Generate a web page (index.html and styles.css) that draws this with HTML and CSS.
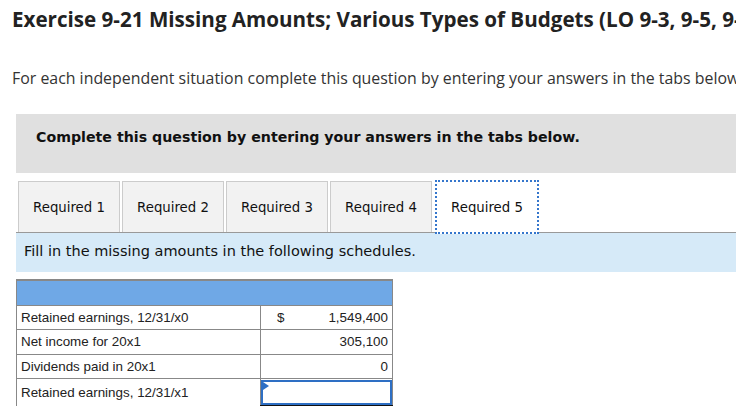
FILE: index.html
```html
<!DOCTYPE html>
<html>
<head>
    <title>Exercise 9-21</title>
    <link rel="stylesheet" href="styles.css">
</head>
<body>
    <h1 class="title">Exercise 9-21 Missing Amounts; Various Types of Budgets (LO 9-3, 9-5, 9-6)</h1>

    <p class="intro">For each independent situation complete this question by entering your answers in the tabs below.</p>

    <div class="notice">Complete this question by entering your answers in the tabs below.</div>

    <div class="tabs">
        <div class="tab">Required 1</div>
        <div class="tab">Required 2</div>
        <div class="tab">Required 3</div>
        <div class="tab">Required 4</div>
        <div class="tab active">Required 5</div>
    </div>

    <div class="instructions">Fill in the missing amounts in the following schedules.</div>

    <table class="schedule">
        <tr class="head"><td colspan="2"></td></tr>
        <tr>
            <td class="label">Retained earnings, 12/31/x0</td>
            <td class="amount"><span class="cur">$</span>1,549,400</td>
        </tr>
        <tr>
            <td class="label">Net income for 20x1</td>
            <td class="amount">305,100</td>
        </tr>
        <tr>
            <td class="label">Dividends paid in 20x1</td>
            <td class="amount">0</td>
        </tr>
        <tr>
            <td class="label">Retained earnings, 12/31/x1</td>
            <td class="amount entry"><div class="field"></div></td>
        </tr>
    </table>
</body>
</html>
```

FILE: styles.css
```css
body { margin: 0; font-family: "Liberation Sans", Arial, sans-serif; color: #222; overflow: hidden; }
.title { font-family: "Open Sans", sans-serif; font-size: 20.6px; line-height: 24px; font-weight: bold; margin: 7px 0 0 12px; white-space: nowrap; color: #222; }
.intro { font-family: "Open Sans", sans-serif; font-size: 15.9px; line-height: 20px; margin: 37px 0 0 12px; white-space: nowrap; color: #333; }
.notice { background: #e0e0e0; margin: 26px 0 0 16px; height: 59px; box-sizing: border-box; padding: 15px 20px; font-family: "DejaVu Sans", Verdana, sans-serif; font-weight: bold; font-size: 14.2px; color: #111; }
.tabs { display: flex; gap: 2px; margin: 8px 0 0 18px; }
.tab { width: 102px; height: 51px; box-sizing: border-box; background: #f2f2f2; border: 1px solid #ccc; border-bottom: none; display: flex; align-items: center; justify-content: center; font-family: "DejaVu Sans", Verdana, sans-serif; font-size: 13.3px; color: #111; }
.tab.active { width: 104px; background: #fff; border: 2px dotted #3576cc; height: 54px; margin: -1px 0 -2px 1px; }
.instructions { margin-left: 16px; border-top: 1px solid #999; background: #d6eaf8; height: 40px; box-sizing: border-box; padding: 10px 8px; font-family: "DejaVu Sans", Verdana, sans-serif; font-size: 14.5px; color: #111; }
.schedule { margin: 7px 0 0 16px; border-collapse: collapse; font-size: 13.4px; }
.schedule td { border: 1px solid #888; height: 24.5px; box-sizing: border-box; padding: 0 4px; color: #222; }
.schedule .head td { background: #6fa8e6; height: 25px; border-top: 2px solid #888; }
.schedule .label { width: 244px; }
.schedule .amount { width: 132px; text-align: right; }
.cur { float: left; margin-left: 12px; }
.schedule .entry { padding: 0; border-bottom: 4px double #111; }
.field { position: relative; height: 21px; border: 2px solid #2e6fc4; margin: 1px 0 0; }
.field::before { content: ""; position: absolute; left: 0; top: 0; border-left: 6px solid #2e6fc4; border-top: 4px solid transparent; border-bottom: 4px solid transparent; }
```
